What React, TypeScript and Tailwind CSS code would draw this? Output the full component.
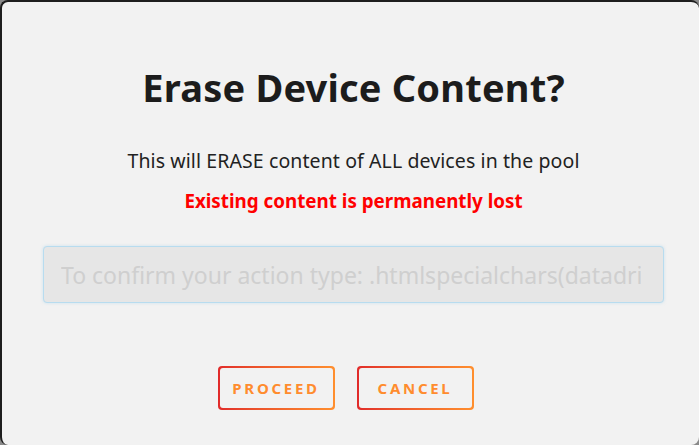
export default function App() {
  const font = { fontFamily: '"Noto Sans", "Open Sans", sans-serif' };

  return (
    <div className="h-[445px] w-[699px] overflow-hidden bg-[#8a8a8a]" style={font}>
      <div className="flex h-full flex-col items-center rounded-lg border-l-2 border-t-2 border-[#1e1e1e] bg-[#f2f2f2] pl-[6px]">
        <h1 className="mt-[60px] text-[38px] font-bold leading-[50px] tracking-[0.2px] text-[#1c1c1c]">
          Erase Device Content?
        </h1>

        <p className="mt-[36px] text-[19.5px] leading-[26px] tracking-[0.1px] text-[#222]">
          This will ERASE content of ALL devices in the pool
        </p>
        <p className="mt-[14px] text-[18.8px] font-bold leading-[26px] text-[#ff0000]">
          Existing content is permanently lost
        </p>

        <input
          type="text"
          placeholder="To confirm your action type: .htmlspecialchars(datadrive)"
          className="mt-[32px] h-[57px] w-[621px] rounded-[4px] border border-[#b8dcef] bg-[#e6e6e6] pl-[17px] pr-[22px] text-[23px] text-[#333] shadow-[0_0_3px_rgba(160,210,240,0.5)] outline-none placeholder:text-[#cfcfcf]"
        />

        <div className="mr-[16px] mt-[63px] flex gap-[22px]">
          {["PROCEED", "CANCEL"].map((label) => (
            <button
              key={label}
              className="rounded-[4px] bg-linear-to-r from-[#e12a2a] to-[#ff8f2e] p-[2px]"
            >
              <span className="flex h-[40px] w-[113px] items-center justify-center rounded-[3px] bg-[#f2f2f2] text-[15px] font-bold tracking-[0.18em] text-[#ff8c2e]">
                {label}
              </span>
            </button>
          ))}
        </div>
      </div>
    </div>
  );
}
